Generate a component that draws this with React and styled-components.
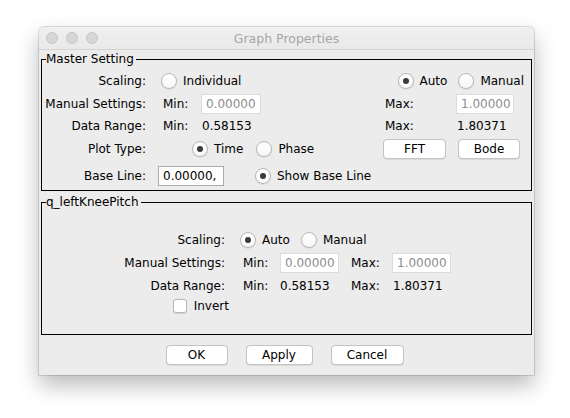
import React from "react";
import styled, { createGlobalStyle } from "styled-components";

const Global = createGlobalStyle`
  html, body { margin: 0; padding: 0; background: #ffffff; }
  body { font-family: "DejaVu Sans", "Liberation Sans", sans-serif; font-size: 12px; color: #000; }
  * { box-sizing: border-box; }
`;

const Page = styled.div`
  width: 570px;
  height: 418px;
  padding: 27px 0 0 39px;
  background: #fff;
`;

const Window = styled.div`
  width: 495px;
  height: 348px;
  background: #ececec;
  border-radius: 5px 5px 0 0;
  box-shadow: 0 0 0 1px rgba(0, 0, 0, 0.12), 0 10px 22px rgba(0, 0, 0, 0.28);
  display: flex;
  flex-direction: column;
  overflow: hidden;
`;

const TitleBar = styled.div`
  height: 23px;
  flex: none;
  border-bottom: 1px solid #d3d3d3;
  background: linear-gradient(#f0f0f0, #e9e9e9);
  display: grid;
  grid-template-columns: 80px 1fr 80px;
  align-items: center;
  border-radius: 5px 5px 0 0;
`;

const Lights = styled.div`
  display: flex;
  gap: 8px;
  padding-left: 7px;
`;

const Light = styled.span`
  width: 12px;
  height: 12px;
  border-radius: 50%;
  background: #d6d6d6;
  border: 1px solid #c6c6c6;
`;

const Title = styled.div`
  text-align: center;
  color: #a6a6a6;
  font-size: 12.5px;
  font-family: "DejaVu Sans", sans-serif;
`;

const Body = styled.div`
  flex: 1;
  display: flex;
  flex-direction: column;
  padding: 2px 2px 0 2px;
`;

const Group = styled.fieldset`
  margin: 0;
  margin-top: ${(p) => p.$mt || 0}px;
  border: 1px solid #000;
  padding: ${(p) => p.$pad};
  min-width: 0;
  flex: ${(p) => (p.$grow ? "1" : "none")};
  display: ${(p) => (p.$center ? "flex" : "block")};
  justify-content: center;
`;

const Legend = styled.legend`
  padding: 0 2px 0 0;
  margin-left: 2px;
  line-height: 14px;
  font-size: 12px;
`;

const Row = styled.div`
  display: flex;
  align-items: center;
  height: 22px;
  margin-top: ${(p) => p.$mt || 0}px;
`;

const Label = styled.div`
  width: ${(p) => p.$w || 102}px;
  text-align: right;
  flex: none;
  white-space: nowrap;
`;

const Left = styled.div`
  display: flex;
  align-items: center;
  flex: 1;
  padding-left: ${(p) => p.$indent}px;
`;

const Cell = styled.div`
  width: ${(p) => p.$w}px;
  flex: none;
  white-space: nowrap;
  padding-left: ${(p) => p.$pl || 0}px;
`;

const Right = styled.div`
  width: 141px;
  flex: none;
  display: flex;
  align-items: center;
  justify-content: ${(p) => (p.$end ? "flex-end" : "flex-start")};
  gap: ${(p) => p.$gap || 0}px;
  margin-right: 7px;
`;

const Field = styled.div`
  width: ${(p) => p.$w}px;
  height: 20px;
  flex: none;
  background: #fff;
  border: 1px solid ${(p) => (p.$disabled ? "#dcdcdc" : "#a9a9a9")};
  color: ${(p) => (p.$disabled ? "#8d8d8d" : "#000")};
  padding-left: 4px;
  line-height: 18px;
  white-space: nowrap;
  overflow: hidden;
`;

const RadioWrap = styled.label`
  display: inline-flex;
  align-items: center;
  gap: 6px;
  margin-left: ${(p) => p.$ml || 0}px;
  white-space: nowrap;
`;

const RadioCircle = styled.span`
  width: 16px;
  height: 16px;
  border-radius: 50%;
  flex: none;
  background: linear-gradient(#ffffff, #f7f7f7);
  border: 1px solid #b9b9b9;
  box-shadow: 0 0.5px 1px rgba(0, 0, 0, 0.15);
  display: flex;
  align-items: center;
  justify-content: center;
  &::after {
    content: "";
    width: 6px;
    height: 6px;
    border-radius: 50%;
    background: ${(p) => (p.$on ? "#3a3a3a" : "transparent")};
  }
`;

const Radio = ({ on, children, ml }) => (
  <RadioWrap $ml={ml}>
    <RadioCircle $on={on} />
    {children}
  </RadioWrap>
);

const Button = styled.button`
  height: 20px;
  width: ${(p) => p.$w}px;
  background: #fff;
  border: 1px solid #c4c4c4;
  border-radius: 4px;
  box-shadow: 0 0.5px 0.5px rgba(0, 0, 0, 0.15);
  font-family: "DejaVu Sans", sans-serif;
  font-size: 12px;
  color: #000;
  padding: 0;
  margin-left: ${(p) => p.$ml || 0}px;
  flex: none;
`;

const Grid = styled.div`
  display: grid;
  grid-template-columns: 102px 18px 37px 59px 12px 41px 59px;
  grid-template-rows: 22px 24px 21px 20px;
  align-items: center;
  align-self: flex-start;
  margin-top: 20px;
  margin-left: -1px;
`;

const GLabel = styled.div`
  grid-column: 1;
  text-align: right;
  white-space: nowrap;
`;

const GItem = styled.div`
  grid-column: ${(p) => p.$col};
  white-space: nowrap;
  display: flex;
  align-items: center;
  margin-left: ${(p) => p.$ml || 0}px;
`;

const CheckWrap = styled.label`
  grid-column: 1;
  justify-self: end;
  margin-right: -4px;
  display: inline-flex;
  align-items: center;
  gap: 7px;
`;

const CheckBox = styled.span`
  width: 14px;
  height: 14px;
  border-radius: 3px;
  background: #fff;
  border: 1px solid #b9b9b9;
  box-shadow: 0 0.5px 1px rgba(0, 0, 0, 0.12);
`;

const Footer = styled.div`
  flex: none;
  height: 40px;
  display: flex;
  justify-content: center;
  align-items: center;
  gap: 18px;
  padding-right: 4px;
`;

export default function App() {
  return (
    <Page>
      <Global />
      <Window>
        <TitleBar>
          <Lights>
            <Light />
            <Light />
            <Light />
          </Lights>
          <Title>Graph Properties</Title>
          <div />
        </TitleBar>
        <Body>
          <Group $pad="4px 0 3px 2px">
            <Legend>Master Setting</Legend>
            <Row>
              <Label>Scaling:</Label>
              <Left $indent={15}>
                <Radio>Individual</Radio>
              </Left>
              <Right $end $gap={11}>
                <Radio on>Auto</Radio>
                <Radio>Manual</Radio>
              </Right>
            </Row>
            <Row $mt={1}>
              <Label>Manual Settings:</Label>
              <Left $indent={17}>
                <Cell $w={38}>Min:</Cell>
                <Field $w={60} $disabled>0.00000</Field>
              </Left>
              <Right>
                <Cell $w={73} $pl={2}>Max:</Cell>
                <Field $w={58} $disabled>1.00000</Field>
              </Right>
            </Row>
            <Row>
              <Label>Data Range:</Label>
              <Left $indent={17}>
                <Cell $w={39}>Min:</Cell>
                <Cell $w={60}>0.58153</Cell>
              </Left>
              <Right>
                <Cell $w={74} $pl={2}>Max:</Cell>
                <Cell $w={60}>1.80371</Cell>
              </Right>
            </Row>
            <Row $mt={1}>
              <Label>Plot Type:</Label>
              <Left $indent={46}>
                <Radio on>Time</Radio>
                <Radio ml={13}>Phase</Radio>
              </Left>
              <Right>
                <Button $w={63}>FFT</Button>
                <Button $w={62} $ml={12}>Bode</Button>
              </Right>
            </Row>
            <Row $mt={5}>
              <Label>Base Line:</Label>
              <Left $indent={12}>
                <Field $w={66}>0.00000,</Field>
                <Radio on ml={31}>Show Base Line</Radio>
              </Left>
            </Row>
          </Group>
          <Group $pad="0 0 0 2px" $grow $center $mt={4}>
            <Legend>q_leftKneePitch</Legend>
            <Grid>
              <GLabel>Scaling:</GLabel>
              <GItem $col="3 / 8" $ml={-3}>
                <Radio on>Auto</Radio>
                <Radio ml={11}>Manual</Radio>
              </GItem>
              <GLabel>Manual Settings:</GLabel>
              <GItem $col={3}>Min:</GItem>
              <GItem $col={4}>
                <Field $w={59} $disabled>0.00000</Field>
              </GItem>
              <GItem $col={6}>Max:</GItem>
              <GItem $col={7}>
                <Field $w={59} $disabled>1.00000</Field>
              </GItem>
              <GLabel>Data Range:</GLabel>
              <GItem $col={3}>Min:</GItem>
              <GItem $col={4}>0.58153</GItem>
              <GItem $col={6}>Max:</GItem>
              <GItem $col={7} $ml={1}>1.80371</GItem>
              <CheckWrap>
                <CheckBox />
                Invert
              </CheckWrap>
            </Grid>
          </Group>
          <Footer>
            <Button $w={62}>OK</Button>
            <Button $w={67}>Apply</Button>
            <Button $w={73}>Cancel</Button>
          </Footer>
        </Body>
      </Window>
    </Page>
  );
}
